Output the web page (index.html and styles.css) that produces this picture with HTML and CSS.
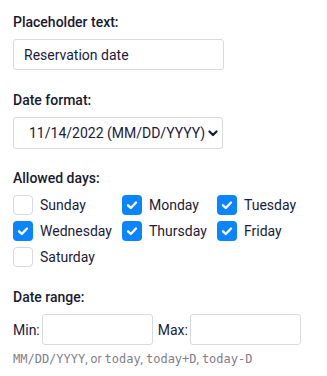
FILE: index.html
```html
<!DOCTYPE html>
<html lang="en">
<head>
    <meta charset="UTF-8">
    <title>Date field settings</title>
    <link rel="stylesheet" href="styles.css">
</head>
<body>
    <div class="settings">
        <div class="field">
            <label class="field-label" for="placeholder">Placeholder text:</label>
            <input class="text-input wide" type="text" id="placeholder" value="Reservation date">
        </div>

        <div class="field tight">
            <label class="field-label" for="format">Date format:</label>
            <div class="select-wrap">
                <select id="format" class="select-input">
                    <option>11/14/2022 (MM/DD/YYYY)</option>
                </select>
                <svg class="chevron" width="10" height="7" viewBox="0 0 10 7"><path d="M1.5 1.5 L5 5 L8.5 1.5" fill="none" stroke="#1b1b3a" stroke-width="2.2" stroke-linecap="round" stroke-linejoin="round"/></svg>
            </div>
        </div>

        <div class="field">
            <span class="field-label">Allowed days:</span>
            <div class="days">
                <label class="day"><span class="box"></span>Sunday</label>
                <label class="day"><span class="box on"></span>Monday</label>
                <label class="day"><span class="box on"></span>Tuesday</label>
                <label class="day"><span class="box on"></span>Wednesday</label>
                <label class="day"><span class="box on"></span>Thursday</label>
                <label class="day"><span class="box on"></span>Friday</label>
                <label class="day"><span class="box"></span>Saturday</label>
            </div>
        </div>

        <div class="field last">
            <span class="field-label">Date range:</span>
            <div class="range">
                <label class="range-label" for="min">Min:</label>
                <input class="text-input short" type="text" id="min">
                <label class="range-label" for="max">Max:</label>
                <input class="text-input short" type="text" id="max">
            </div>
            <p class="hint"><code>MM/DD/YYYY</code>, or <code>today</code>, <code>today+D</code>, <code>today-D</code></p>
        </div>
    </div>
</body>
</html>
```

FILE: styles.css
```css
body {
    margin: 0;
    background: #ffffff;
    font-family: Roboto, "Liberation Sans", sans-serif;
    color: #1b1b3a;
}

.settings {
    padding: 14px 13px 0;
}

.field {
    margin-bottom: 22px;
}

.field.tight {
    margin-bottom: 21px;
}

.field.last {
    margin-bottom: 0;
}

.field-label {
    display: block;
    font-size: 14px;
    font-weight: 500;
    color: #1a1a2e;
    margin-bottom: 9px;
    line-height: 16px;
}

.text-input {
    box-sizing: border-box;
    height: 31px;
    border: 1px solid #d9d9e3;
    border-radius: 3px;
    padding: 0 10px;
    font-family: inherit;
    font-size: 14px;
    color: #1b1b3a;
    background: #fff;
}

.wide {
    width: 211px;
}

.short {
    width: 111px;
}

.select-wrap {
    position: relative;
    width: 210px;
}

.select-input {
    -webkit-appearance: none;
    appearance: none;
    box-sizing: border-box;
    width: 210px;
    height: 32px;
    border: 1px solid #d9d9e3;
    border-radius: 3px;
    padding: 0 0 0 15px;
    font-family: inherit;
    font-size: 14px;
    color: #1b1b3a;
    background: #fff;
}

.chevron {
    position: absolute;
    right: 5px;
    top: 13px;
    pointer-events: none;
}

.days {
    display: grid;
    grid-template-columns: 109px 95px auto;
    row-gap: 6px;
}

.day {
    display: flex;
    align-items: center;
    gap: 7px;
    font-size: 14px;
    height: 20px;
}

.box {
    box-sizing: border-box;
    width: 20px;
    height: 20px;
    border: 1px solid #d7d7e5;
    border-radius: 4px;
    background: #fff;
    flex-shrink: 0;
}

.box.on {
    border: none;
    background: #0b84ff url("data:image/svg+xml,%3Csvg xmlns='http://www.w3.org/2000/svg' width='20' height='20'%3E%3Cpath d='M6 10.3 L8.8 13 L14 7.5' fill='none' stroke='white' stroke-width='2.4' stroke-linecap='round' stroke-linejoin='round'/%3E%3C/svg%3E") no-repeat center;
}

.range {
    display: flex;
    align-items: center;
    font-size: 14px;
}

.range-label {
    margin-right: 2px;
}

.range .short + .range-label {
    margin-left: 5px;
}

.hint {
    margin: 7px 0 0;
    font-size: 12px;
    line-height: 14px;
    color: #80808c;
}

.hint code {
    font-family: "DejaVu Sans Mono", monospace;
    font-size: 12px;
}
```
